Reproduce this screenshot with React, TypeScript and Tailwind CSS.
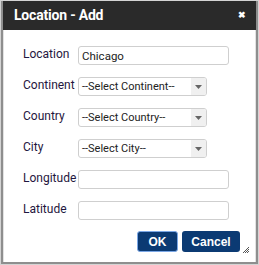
import { useState } from 'react'

function Select({ placeholder }: { placeholder: string }) {
  return (
    <div className="flex h-[19px] w-[129px] items-center overflow-hidden rounded-[3px] border border-[#cfcfcf] bg-white">
      <span className="min-w-0 flex-1 overflow-hidden whitespace-nowrap pl-[3px] text-[11px] leading-[17px] text-[#222]">
        {placeholder}
      </span>
      <span className="flex h-full w-[15px] shrink-0 items-center justify-center bg-[#f0f0f0]">
        <svg width="7" height="4" viewBox="0 0 7 4">
          <path d="M0 0h7L3.5 4z" fill="#666" />
        </svg>
      </span>
    </div>
  )
}

function TextInput({ value }: { value?: string }) {
  const [v, setV] = useState(value ?? '')
  return (
    <input
      value={v}
      onChange={(e) => setV(e.target.value)}
      className="h-[19px] w-[151px] rounded-[3px] border border-[#cfcfcf] bg-white pl-[3px] text-[11.5px] text-[#222] outline-none"
    />
  )
}

const rows: { label: string; kind: 'input' | 'select'; value?: string }[] = [
  { label: 'Location', kind: 'input', value: 'Chicago' },
  { label: 'Continent', kind: 'select', value: '--Select Continent--' },
  { label: 'Country', kind: 'select', value: '--Select Country--' },
  { label: 'City', kind: 'select', value: '--Select City--' },
  { label: 'Longitude', kind: 'input' },
  { label: 'Latitude', kind: 'input' },
]

export default function App() {
  return (
    <div
      className="h-[265px] w-[259px] border border-[#d4d4d4] bg-white"
      style={{ fontFamily: 'Roboto, "Liberation Sans", sans-serif' }}
    >
      <div className="flex h-full flex-col border-x-2 border-b-2 border-[#8e8e8e]">
        {/* Title bar */}
        <div className="flex h-[29px] items-center justify-between bg-[#2a2a2a] pl-[11px] pr-[10px]">
          <span className="text-[14px] font-bold tracking-[-0.2px] text-white">Location - Add</span>
          <span className="text-[9px] font-bold leading-none text-white">✖</span>
        </div>

        {/* Form */}
        <div className="relative flex flex-1 flex-col border-x border-[#e2e2e2] pt-[16px]">
          <div className="flex flex-col gap-[12px]">
            {rows.map((r) => (
              <div key={r.label} className="flex items-start pl-[19px]">
                <label className="w-[55px] pt-[1px] text-[12px] leading-[14px] text-[#1f1740]">{r.label}</label>
                {r.kind === 'input' ? <TextInput value={r.value} /> : <Select placeholder={r.value ?? ''} />}
              </div>
            ))}
          </div>

          <div className="mt-[11px] flex justify-end gap-[4px] pr-[15px]">
            <button
              className="h-[21px] w-[41px] rounded-[3px] border border-[#7aa7e6] bg-[#0b3a73] text-[12px] font-bold text-white"
              style={{ fontFamily: '"Liberation Sans", Arial, sans-serif' }}
            >
              OK
            </button>
            <button
              className="h-[21px] w-[58px] rounded-[3px] bg-[#0b3a73] text-[12px] font-bold text-white"
              style={{ fontFamily: '"Liberation Sans", Arial, sans-serif' }}
            >
              Cancel
            </button>
          </div>

          {/* resize grip */}
          <svg className="absolute bottom-[8px] right-[5px]" width="8" height="8" viewBox="0 0 8 8">
            <path d="M7 1L1 7M7 3L3 7M7 5L5 7" stroke="#555" strokeWidth="1" />
          </svg>
        </div>
      </div>
    </div>
  )
}
